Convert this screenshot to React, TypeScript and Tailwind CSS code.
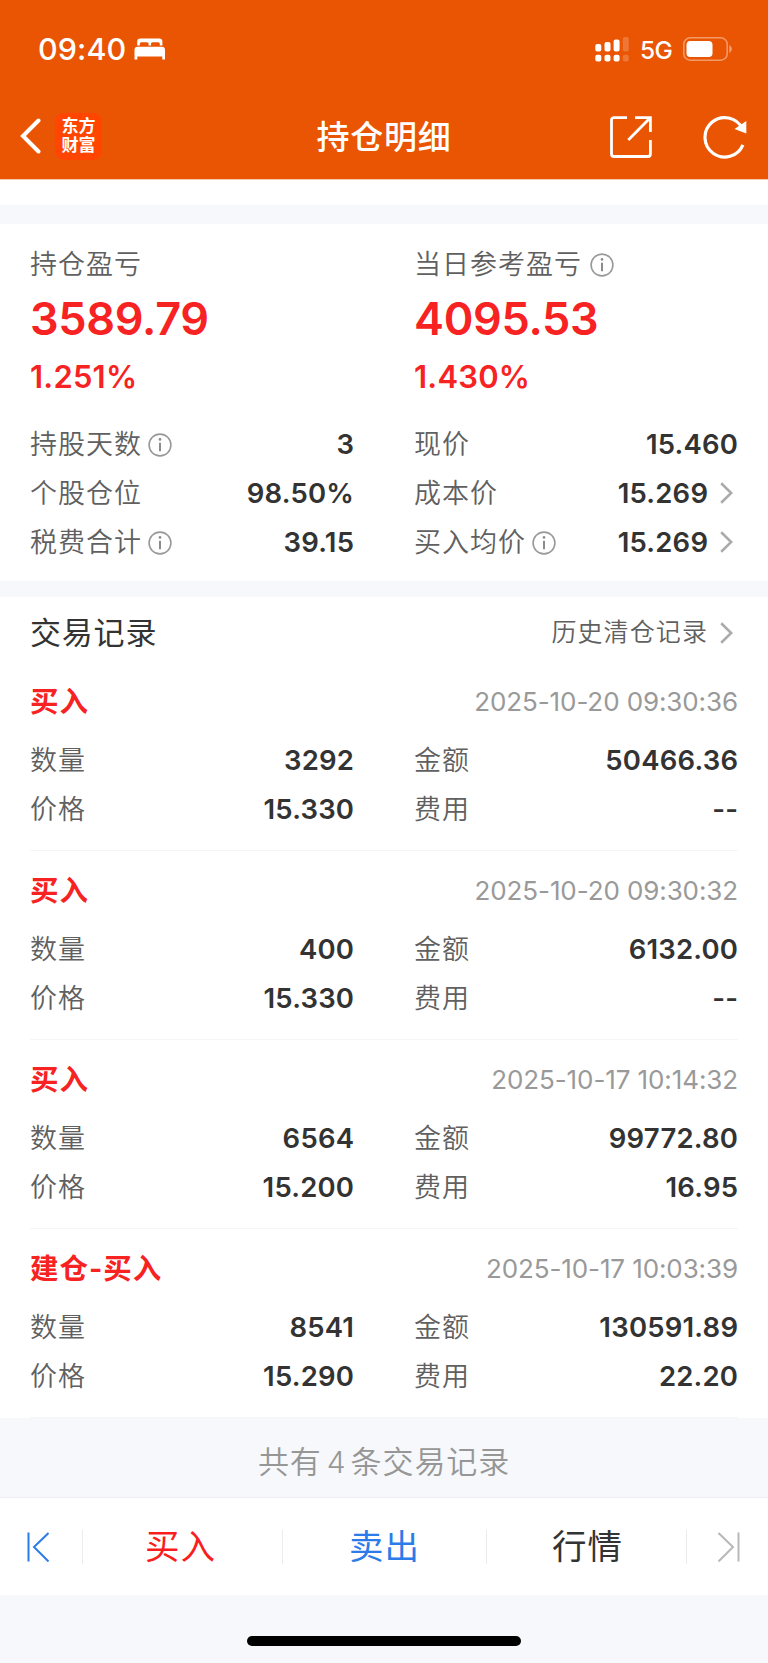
import type { ReactNode } from "react";

type TradeRecord = {
  type: string;
  time: string;
  count: string;
  amount: string;
  price: string;
  fee: string;
};

const records: TradeRecord[] = [
  { type: "买入", time: "2025-10-20 09:30:36", count: "3292", amount: "50466.36", price: "15.330", fee: "--" },
  { type: "买入", time: "2025-10-20 09:30:32", count: "400", amount: "6132.00", price: "15.330", fee: "--" },
  { type: "买入", time: "2025-10-17 10:14:32", count: "6564", amount: "99772.80", price: "15.200", fee: "16.95" },
  { type: "建仓-买入", time: "2025-10-17 10:03:39", count: "8541", amount: "130591.89", price: "15.290", fee: "22.20" },
];

function InfoIcon() {
  return (
    <svg className="mt-px ml-px h-6 w-6 shrink-0" viewBox="0 0 24 24" fill="none">
      <circle cx="12" cy="12" r="10.9" stroke="#999" strokeWidth="1.6" />
      <path d="M12 9.8V18.2" stroke="#8c8c8c" strokeWidth="2" />
      <circle cx="12" cy="6.4" r="1.3" fill="#8c8c8c" />
    </svg>
  );
}

function ChevronIcon() {
  return (
    <svg className="mr-[5px] ml-[12px] h-[22px] w-[13px] shrink-0" viewBox="0 0 13 22" fill="none">
      <path d="M1.2 1.2L11.2 11L1.2 20.8" stroke="#ababab" strokeWidth="2.6" />
    </svg>
  );
}

function StatusBar() {
  return (
    <div className="flex h-[98px] items-center pl-[38px] pr-[35px] text-white">
      <span className="text-[30.5px] font-medium leading-none tracking-[0.1px]">09:40</span>
      <svg className="ml-[8px] h-[22px] w-[32px]" viewBox="0 0 32 22" fill="white">
        <path d="M3.2 7.6V3.6A3.2 3.2 0 0 1 6.4.4h18.8a3.2 3.2 0 0 1 3.2 3.2v4h-2.6V5.8A1.6 1.6 0 0 0 24.2 4.2h-5.6A1.6 1.6 0 0 0 17 5.8V7.6H14.6V5.8A1.6 1.6 0 0 0 13 4.2H7.4A1.6 1.6 0 0 0 5.8 5.8V7.6z" />
        <path d="M.5 21.5V12A3.2 3.2 0 0 1 3.7 8.8h24.1A3.2 3.2 0 0 1 31 12v9.5h-2.7V18.6H3.3v2.9z" />
      </svg>
      <div className="grow" />
      <svg className="h-[26px] w-[35px]" viewBox="0 0 35 26" fill="white">
        <rect x="0.3" y="8" width="6" height="7.5" rx="2" />
        <rect x="9.5" y="6" width="6" height="9.5" rx="2" />
        <rect x="18.6" y="3.6" width="6" height="11.9" rx="2" />
        <rect x="27.8" y="1" width="6" height="14.5" rx="2" opacity="0.2" />
        <rect x="0.3" y="18.8" width="6" height="6.6" rx="2" />
        <rect x="9.5" y="18.8" width="6" height="6.6" rx="2" />
        <rect x="18.6" y="18.8" width="6" height="6.6" rx="2" />
        <rect x="27.8" y="18.8" width="6" height="6.6" rx="2" opacity="0.2" />
      </svg>
      <span className="ml-[10px] mt-[2px] text-[24.5px] font-medium leading-none tracking-[-0.7px]">5G</span>
      <svg className="ml-[11px] h-[24px] w-[50px]" viewBox="0 0 50 24" fill="none">
        <rect x="0.8" y="0.8" width="43.4" height="22.4" rx="6.5" stroke="white" strokeOpacity="0.4" strokeWidth="1.6" />
        <rect x="3.5" y="3.9" width="26" height="16.2" rx="3.8" fill="white" />
        <path d="M46.3 8.2c1.5.6 2.5 2 2.5 3.8s-1 3.2-2.5 3.8z" fill="white" fillOpacity="0.45" />
      </svg>
    </div>
  );
}

function NavBar() {
  return (
    <div className="flex h-[76px] items-center text-white">
      <div className="flex w-[300px] items-center pl-[20px]">
        <svg className="h-[36px] w-[21px]" viewBox="0 0 21 36" fill="none">
          <path d="M18.5 2.5L3 18L18.5 33.5" stroke="white" strokeWidth="4" strokeLinecap="round" />
        </svg>
        <div className="ml-[14px] flex h-[47px] w-[47px] flex-col items-center justify-center rounded-[9px] bg-[#ff4500] text-[17px] font-bold leading-[19.5px]">
          <span>东方</span>
          <span>财富</span>
        </div>
      </div>
      <h1 className="grow pt-[2px] text-center text-[33px] font-medium leading-none tracking-[0.7px]">持仓明细</h1>
      <div className="flex w-[300px] items-center justify-end pr-[20px]">
        <svg className="mt-px h-[44px] w-[44px]" viewBox="0 0 44 44" fill="none" stroke="white" strokeWidth="2.8">
          <path d="M18 2.6H5A2.5 2.5 0 0 0 2.5 5.1V39A2.5 2.5 0 0 0 5 41.5H38.9A2.5 2.5 0 0 0 41.4 39V25" />
          <path d="M26 2.6H41.4V17M41 3L19.3 25" />
        </svg>
        <svg className="ml-[47px] h-[46px] w-[48px]" viewBox="0 0 48 46" fill="none">
          <path d="M42.3 15.5A19.7 19.7 0 1 0 42.9 31.8" stroke="white" strokeWidth="3.2" />
          <path d="M34.5 16L46.3 8.1V20.5z" fill="white" />
        </svg>
      </div>
    </div>
  );
}

function Summary({ label, value, percent, info }: { label: string; value: string; percent: string; info?: boolean }) {
  return (
    <div>
      <div className="flex h-[40px] items-center gap-[7px]">
        <span className="pt-[2px] text-[27px] font-[350] tracking-[1px] text-[#606060]">{label}</span>
        {info && <InfoIcon />}
      </div>
      <div className="flex h-[70px] items-center text-[45px] font-semibold tracking-[-0.3px] text-[#f72222]">{value}</div>
      <div className="flex h-[46px] items-center text-[31px] font-semibold tracking-[0.2px] text-[#f72222]">{percent}</div>
    </div>
  );
}

function Row({ label, value, info, arrow }: { label: string; value: string; info?: boolean; arrow?: boolean }) {
  return (
    <div className="flex h-[49px] items-center">
      <span className="mr-[5px] pt-[2px] text-[27px] font-[350] tracking-[1px] text-[#606060]">{label}</span>
      {info && <InfoIcon />}
      <span className="-mr-[0.2px] ml-auto pt-px text-[27.5px] font-semibold tracking-[0.2px] text-[#333]">{value}</span>
      {arrow && <ChevronIcon />}
    </div>
  );
}

function Columns({ children }: { children: ReactNode }) {
  return <div className="grid grid-cols-2 gap-x-[60px]">{children}</div>;
}

function Trade({ record }: { record: TradeRecord }) {
  return (
    <div className="h-[189px] border-b border-[#f5f5f7] pt-[15px]">
      <div className="mb-[10px] flex h-[49px] items-center justify-between">
        <span className="pt-[2px] text-[28.5px] font-bold tracking-[1px] text-[#f72222]">{record.type}</span>
        <span className="text-[26px] tracking-[-0.1px] text-[#999]">{record.time}</span>
      </div>
      <Columns>
        <Row label="数量" value={record.count} />
        <Row label="金额" value={record.amount} />
        <Row label="价格" value={record.price} />
        <Row label="费用" value={record.fee} />
      </Columns>
    </div>
  );
}

function BottomBar() {
  return (
    <div className="flex h-[98px] items-center border-t border-[#eceef0] bg-white text-[34.5px] tracking-[1px]">
      <div className="flex h-[34px] w-[83px] items-center border-r border-[#ececec] pl-[26px]">
        <svg className="h-[30px] w-[23px]" viewBox="0 0 23 30" fill="none" stroke="#2b7ce9" strokeWidth="2">
          <path d="M2.5 0.5V29.5M22.5 1L8 15L22.5 29.5" />
        </svg>
      </div>
      <div className="flex h-[34px] w-[200px] items-center justify-center border-r border-[#ececec] pr-[4px] text-[#f91d1d]">买入</div>
      <div className="flex h-[34px] w-[204px] items-center justify-center border-r border-[#ececec] text-[#2b7ce9]">卖出</div>
      <div className="flex h-[34px] w-[200px] items-center justify-center border-r border-[#ececec] pl-[2px] text-[#333]">行情</div>
      <div className="flex grow items-center justify-end pr-[27px]">
        <svg className="h-[30px] w-[23px]" viewBox="0 0 23 30" fill="none" stroke="#b8b8b8" strokeWidth="2">
          <path d="M20.5 0.5V29.5M0.5 1L15 15L0.5 29.5" />
        </svg>
      </div>
    </div>
  );
}

export default function App() {
  return (
    <div className="flex h-[1663px] w-[768px] flex-col overflow-hidden bg-[#f6f8fb] font-['Inter','Noto_Sans_CJK_SC',sans-serif]">
      <header className="h-[179px] shrink-0 bg-[#ea5504]">
        <StatusBar />
        <NavBar />
      </header>
      <div className="h-[26px] shrink-0 border-t border-[#f9c7ab] bg-white" />

      <section className="mt-[19px] h-[357px] shrink-0 bg-white px-[30px] pt-[20px]">
        <Columns>
          <Summary label="持仓盈亏" value="3589.79" percent="1.251%" />
          <Summary label="当日参考盈亏" value="4095.53" percent="1.430%" info />
        </Columns>
        <div className="mt-[19.5px]">
          <Columns>
            <Row label="持股天数" value="3" info />
            <Row label="现价" value="15.460" />
            <Row label="个股仓位" value="98.50%" />
            <Row label="成本价" value="15.269" arrow />
            <Row label="税费合计" value="39.15" info />
            <Row label="买入均价" value="15.269" info arrow />
          </Columns>
        </div>
      </section>

      <section className="mt-4 shrink-0 bg-white px-[30px]">
        <div className="flex h-[65px] items-center justify-between pt-[6px]">
          <h2 className="pt-px text-[31px] tracking-[0.8px] text-[#333]">交易记录</h2>
          <div className="flex items-center">
            <span className="pt-px text-[25px] font-[350] tracking-[1.1px] text-[#606060]">历史清仓记录</span>
            <ChevronIcon />
          </div>
        </div>
        {records.map((record) => (
          <Trade key={record.time} record={record} />
        ))}
      </section>

      <div className="flex h-[79px] shrink-0 items-center justify-center gap-[5px] pt-[9px] text-[31px] font-[350] tracking-[0.9px] text-[#969696]">
        <span>共有</span>
        <span className="text-[30px] tracking-normal">4</span>
        <span>条交易记录</span>
      </div>
      <BottomBar />
      <div className="flex grow items-end justify-center pb-[17px]">
        <div className="h-[10px] w-[274px] rounded-full bg-black" />
      </div>
    </div>
  );
}
